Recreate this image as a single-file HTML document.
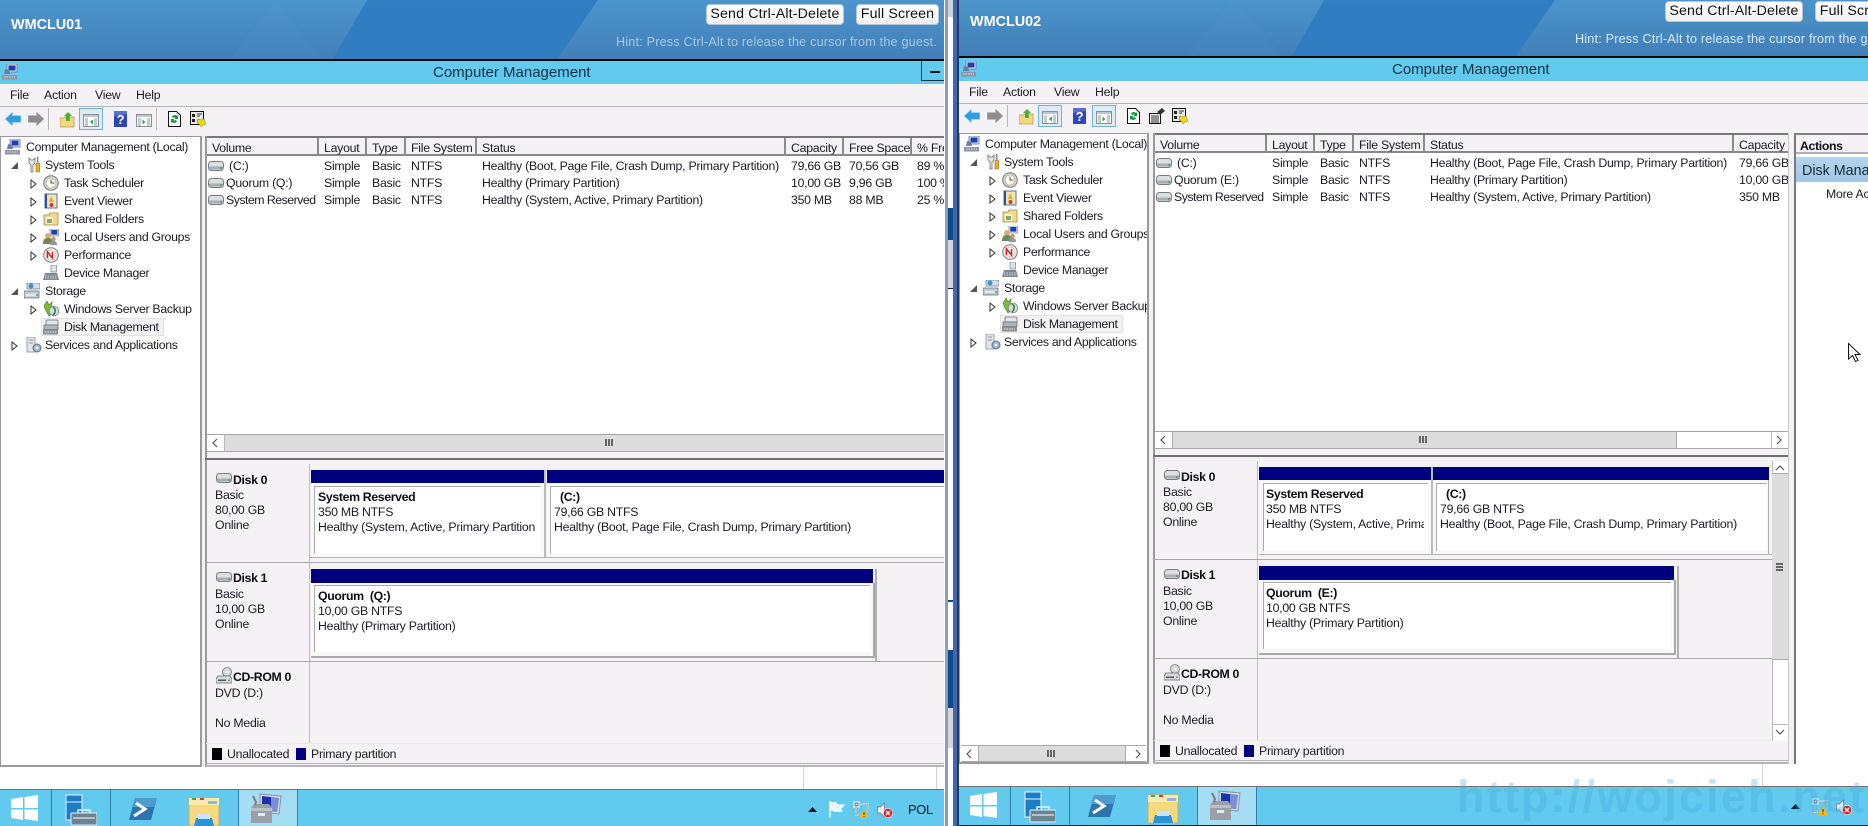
<!DOCTYPE html>
<html lang="en"><head><meta charset="utf-8"><title>Computer Management</title>
<style>
html,body{margin:0;padding:0;background:#fff}
#root{position:relative;width:1868px;height:826px;overflow:hidden;background:#fff;font-family:"Liberation Sans",sans-serif;font-size:12.3px;letter-spacing:-.25px;color:#1b1b24;filter:blur(.3px)}
.p{position:absolute;overflow:hidden}
.b{position:absolute}
.t{position:absolute;white-space:nowrap;line-height:16px;height:16px}
.tree .t{letter-spacing:-.3px}
.s{font-weight:bold;color:#0d0d16;letter-spacing:-.35px}
svg.i{position:absolute;overflow:visible}
.btn{position:absolute;background:linear-gradient(#fff,#efefef);border:1px solid #b9c6d2;border-radius:4px;box-sizing:border-box;color:#111;font-size:14.2px;letter-spacing:.15px;text-align:center;white-space:nowrap;line-height:19px}
</style></head><body><div id="root">
<svg width="0" height="0" style="position:absolute">
<defs>
<symbol id="pc" viewBox="0 0 16 16"><rect x="5" y="0" width="10" height="8" fill="#dfe6f2" stroke="#7788a8"/><rect x="6.5" y="1.5" width="7" height="5" fill="#1c3fb0"/><path d="M3 5l4 1 1 4H2z" fill="#6b7ca0"/><rect x="0" y="11" width="15" height="4.5" fill="#8b95a6"/><path d="M2 13h11" stroke="#dfe3ea" stroke-dasharray="1.5 1"/></symbol>
<symbol id="tools" viewBox="0 0 16 16"><path d="M3 1v5l2 2v7h2V8l2-2V1L7 3H5z" fill="#e6e6e6" stroke="#6f6f6f" stroke-width=".8"/><rect x="10" y="6" width="3.6" height="9" rx="1" fill="#eeb020" stroke="#8a6a10" stroke-width=".6"/><rect x="11" y="0" width="1.5" height="7" fill="#8a8f98"/></symbol>
<symbol id="clock" viewBox="0 0 16 16"><circle cx="8" cy="8" r="7.3" fill="#dbd5c3" stroke="#7a7a86"/><circle cx="8" cy="8" r="5" fill="#fffdf2" stroke="#a69f85" stroke-width=".6"/><path d="M8 4.5V8h3.5" stroke="#50505a" stroke-width="1" fill="none"/></symbol>
<symbol id="evt" viewBox="0 0 16 16"><rect x="2" y="1" width="12" height="14" fill="#f1e4bd" stroke="#5472a8"/><path d="M3 1v14" stroke="#2d4f9e" stroke-width="2"/><path d="M8 3l3 6H6z" fill="#e8b020"/><circle cx="8.5" cy="12" r="2" fill="#c83a3a"/></symbol>
<symbol id="share" viewBox="0 0 16 16"><path d="M1 4h5l1-2h8v12H1z" fill="#f0d98a" stroke="#a58c48" stroke-width=".8"/><rect x="3" y="6" width="7" height="7" fill="#fbf3cf"/><path d="M4 9h5M4 11h5" stroke="#3a7d3a" stroke-width="1.2"/></symbol>
<symbol id="users" viewBox="0 0 16 16"><rect x="7" y="0" width="8.5" height="7" fill="#e1e7f1" stroke="#7788a8" stroke-width=".7"/><rect x="8.3" y="1" width="6" height="4.6" fill="#1c3fb0"/><circle cx="5" cy="7" r="3" fill="#d9ae74"/><path d="M0 15c0-5 2-6 5-6s5 1 5 6z" fill="#6e8a56"/><circle cx="10.5" cy="10" r="2.2" fill="#c89a60"/><path d="M7 16c0-3 1-4 3.5-4s3.5 1 3.5 4z" fill="#8b97ad"/></symbol>
<symbol id="perf" viewBox="0 0 16 16"><circle cx="8" cy="8" r="7.3" fill="#f2e9e5" stroke="#7d7d88"/><circle cx="8" cy="8" r="4.8" fill="#fff" stroke="#c9b6ae" stroke-width=".6"/><path d="M4.5 11V5l5 6V5" stroke="#d01e1e" stroke-width="1.5" fill="none"/></symbol>
<symbol id="dev" viewBox="0 0 16 16"><rect x="8" y="0" width="5.5" height="7" fill="#dce1e7" stroke="#79808c" stroke-width=".7"/><path d="M2 8h12l2 7H0z" fill="#7f8793"/><path d="M2 11h12M2 13h12" stroke="#d5d9df" stroke-dasharray="1.5 1"/></symbol>
<symbol id="stor" viewBox="0 0 16 16"><rect x="3" y="0" width="13" height="6" rx="1" fill="#d4e1ea" stroke="#6d7f8f" stroke-width=".8"/><circle cx="7" cy="3" r="2.5" fill="#3d96c9"/><rect x="0" y="8" width="15" height="7" rx="1" fill="#c7cdd4" stroke="#5f6a75" stroke-width=".8"/><path d="M2 12h10" stroke="#fff"/><circle cx="13" cy="12" r="1" fill="#3b3"/></symbol>
<symbol id="wsb" viewBox="0 0 16 16"><path d="M1 5l3-5 2 4 3-3-1 6 3 3-5 5-3-5z" fill="#7db93a" stroke="#3c7d22" stroke-width=".6"/><circle cx="11" cy="10" r="4.8" fill="#d7dce2" stroke="#6f7580" stroke-width=".7"/><path d="M10 6c3 2 3 5 0 8" stroke="#2c8b3a" stroke-width="1.6" fill="none"/></symbol>
<symbol id="disk" viewBox="0 0 16 16"><rect x="3" y="1" width="12" height="5" rx="1" fill="#e4e7ea" stroke="#6b7077" stroke-width=".8"/><rect x="1" y="6" width="14" height="4.5" fill="#b2b6bb" stroke="#6b7077" stroke-width=".8"/><rect x="0" y="10.5" width="15" height="5" fill="#8b9098"/><path d="M2 13h11" stroke="#eceef0" stroke-dasharray="1.5 1"/></symbol>
<symbol id="svc" viewBox="0 0 16 16"><rect x="1" y="0" width="8" height="15" fill="#e1e4e8" stroke="#8c929b" stroke-width=".8"/><path d="M3 3h4M3 6h4" stroke="#8b98a8"/><circle cx="11" cy="11" r="4" fill="#9fb4c8" stroke="#5f7488"/><circle cx="11" cy="11" r="1.4" fill="#eef2f5"/></symbol>
<symbol id="drive" viewBox="0 0 16 10"><rect x=".5" y=".5" width="15" height="9" rx="3" fill="#dcdfe2" stroke="#777c83"/><rect x="1" y="5.500" width="14" height="3" rx="1" fill="#a8adb3"/><rect x="12" y="6" width="2" height="2" fill="#5a5"/></symbol>
<symbol id="cd" viewBox="0 0 16 17"><circle cx="11" cy="5" r="4.5" fill="#d5d9dd" stroke="#6f7379" stroke-width=".8"/><circle cx="11" cy="5" r="1.1" fill="#fff"/><path d="M2 9h12l2 3v4H0v-4z" fill="#d9dcdf" stroke="#62676d" stroke-width=".8"/><rect x="2" y="12.5" width="8" height="1.5" fill="#555"/><rect x="12" y="12.5" width="2" height="1.5" fill="#5a5"/></symbol>
<symbol id="back" viewBox="0 0 16 14"><path d="M7.5 0v3.5H16v7H7.5V14L0 7z" fill="#2f9ee0" stroke="#a8daf4" stroke-width=".8"/></symbol>
<symbol id="fwd" viewBox="0 0 16 14"><path d="M8.5 0v3.5H0v7h8.5V14L16 7z" fill="#8c8c8c" stroke="#bdbdbd" stroke-width=".8"/></symbol>
<symbol id="upf" viewBox="0 0 15 16"><path d="M0 6h4l1-1h9v10H0z" fill="#f1d77e" stroke="#b99a4b" stroke-width=".8"/><path d="M8 0l4 4H9.8v5H6V4H4z" fill="#4aae3c"/></symbol>
<symbol id="ptree" viewBox="0 0 16 13"><rect x=".5" y=".5" width="15" height="12" fill="#fff" stroke="#8a9099"/><rect x="1" y="1" width="14" height="2" fill="#c1c6cd"/><path d="M2 5h3M2 7h3M2 9h3M2 11h3M11 5h3M11 7h3M11 9h3M11 11h3" stroke="#7f9aa0"/><path d="M10 5.5V10.5L7 8z" fill="#3da04a"/></symbol>
<symbol id="pact" viewBox="0 0 16 13"><rect x=".5" y=".5" width="15" height="12" fill="#fff" stroke="#8a9099"/><rect x="1" y="1" width="14" height="2" fill="#c1c6cd"/><path d="M2 5h3M2 7h3M2 9h3M2 11h3M11 5h3M11 7h3M11 9h3M11 11h3" stroke="#7f9aa0"/><path d="M6.500 5.500V10.500L9.500 8z" fill="#3da04a"/></symbol>
<symbol id="help" viewBox="0 0 13 16"><rect width="13" height="16" fill="#2f47b4"/><path d="M0 0h13v3L0 5z" fill="#5a70d0"/><text x="6.5" y="13" text-anchor="middle" fill="#fff" font-size="13" font-family="Liberation Sans" font-weight="bold">?</text></symbol>
<symbol id="refresh" viewBox="0 0 13 16"><path d="M.5.500h8l4 4V15.500H.5z" fill="#fff" stroke="#111"/><path d="M4 6a3 3 0 0 1 5-1l1-1v4H6.500l1-1a1.500 1.500 0 0 0-2 0zM9 10a3 3 0 0 1-5 1l-1 1V8h3.500l-1 1a1.500 1.500 0 0 0 2 0z" fill="#0f9a3c"/></symbol>
<symbol id="export" viewBox="0 0 16 16"><rect x=".5" y=".5" width="13" height="13" fill="#e8e8e8" stroke="#111"/><path d="M2 3h3v3H2zM2 8h3v3H2z" fill="#222"/><path d="M7 3h5M7 5h3M7 9h2" stroke="#333"/><path d="M8 8l3 1 3-1 1 3 1 2-3 1-2 2-2-3-2-1z" fill="#eadb18" stroke="#8a7f0d" stroke-width=".5"/></symbol>
<symbol id="props" viewBox="0 0 16 16"><rect x=".5" y="5.500" width="11" height="10" fill="#fff" stroke="#111"/><path d="M2 8h8M2 10h8M2 12h8M2 14h8" stroke="#222"/><path d="M8 4l5-4 3 3-5 4z" fill="#333"/></symbol>
<symbol id="win" viewBox="0 0 27 26"><path d="M0 4l12-2v11H0zM13.500 2L27 0v13H13.500zM0 14.500h12V25L0 23zM13.500 14.500H27V26l-13.500-2z" fill="#fff"/></symbol>
<symbol id="srv" viewBox="0 0 32 31"><rect x="1" y="1" width="16" height="25" fill="#1f7dc6" stroke="#e8f4fb"/><path d="M1 8h16" stroke="#e8f4fb"/><rect x="6" y="19" width="26" height="12" rx="1" fill="#6a8494" stroke="#e6f2f8"/><path d="M13 19v-3h12v3" fill="none" stroke="#e6f2f8" stroke-width="1.5"/><path d="M8 24h22" stroke="#fff"/></symbol>
<symbol id="ps" viewBox="0 0 28 22"><path d="M6 0h22l-6 22H0z" fill="#2e72ae"/><path d="M6 0h22l-3 9H3z" fill="#4f9bd0"/><path d="M7 5l9 6-11 7" fill="none" stroke="#fff" stroke-width="3"/></symbol>
<symbol id="exp" viewBox="0 0 32 31"><path d="M1 3h30v28H1z" fill="#f6d97f" stroke="#c9ad56"/><path d="M1 3h30v7H1z" fill="#f9eab0"/><rect x="4" y="3" width="4" height="2" fill="#4aa64a"/><rect x="12" y="3" width="4" height="2" fill="#d34"/><rect x="20" y="6" width="9" height="3" fill="#8fb6dc"/><path d="M6 31l2-8h16l2 8z" fill="#2d93d8"/><rect x="10" y="19" width="12" height="5" fill="#c7e4f8"/></symbol>
<symbol id="mgmt" viewBox="0 0 32 32"><path d="M10 1l21 2-2 18-19-2z" fill="#d6dde7" stroke="#8793a3"/><path d="M12 3l17 2-2 14-15-2z" fill="#1c31ad"/><path d="M21 4l8 1-2 14-6-1z" fill="#7d8ed8"/><path d="M1 15l3-4h15l3 4v15H1z" fill="#9aa0a6"/><path d="M1 15h21v3H1z" fill="#bcc0c5"/><rect x="8" y="20" width="7" height="3" fill="#e6e8ea"/><path d="M3 3l3 6-1 3" stroke="#7c7f85" stroke-width="2" fill="none"/></symbol>
<symbol id="flag" viewBox="0 0 16 17"><path d="M1 0v16.500" stroke="#fff" stroke-width="1.400"/><path d="M1.700 1.500h4.800l2.500 2.500h6l-3 4 1 2.500H6L3.500 9H1.700z" fill="#e6f5fc" stroke="#fff" stroke-width="1"/></symbol>
<symbol id="net" viewBox="0 0 16 17"><rect x="1" y="1" width="5" height="5" fill="#cfe8f5" stroke="#fff" stroke-width="1"/><rect x="2" y="2" width="3" height="3" fill="none" stroke="#28465c" stroke-width=".7"/><path d="M3 6v8h3M6 3h9v9" stroke="#fff" stroke-width="1.800" fill="none"/><path d="M3 6v8h3M6 3h9v9" stroke="#28465c" stroke-width=".6" fill="none"/><path d="M11 8l5 9H6z" fill="#f6b916"/><path d="M11 11v3M11 15v1" stroke="#222"/></symbol>
<symbol id="snd" viewBox="0 0 16 16"><path d="M.5 5h3l4-4v14l-4-4h-3z" fill="#f3f7fa" stroke="#5a7285" stroke-width=".7"/><circle cx="11" cy="11" r="4.700" fill="#d8212f" stroke="#fff" stroke-width=".6"/><path d="M9 9l4 4M13 9l-4 4" stroke="#fff" stroke-width="1.300"/></symbol>
</defs>
</svg>

<!-- LEFT WINDOW -->
<div class="p" style="left:0;top:0;width:944px;height:826px;background:#f4f2f5">
  <div class="b" style="left:0;top:0;width:944px;height:59px;background:linear-gradient(#4b95cc,#437fb8)"></div>
  <svg class="i" style="left:0;top:0" width="944" height="59"><polygon points="367,0 598,0 557,59 333,59" fill="#2f7cc2" opacity=".95"/><polygon points="275,0 323,59 230,59" fill="#5a9cd0" opacity=".12"/></svg>
  <div class="t" style="left:11px;top:17px;color:#fff;font-weight:bold;font-size:14.4px;letter-spacing:0">WMCLU01</div>
  <div class="btn" style="left:706px;top:4px;width:138px;height:21px">Send Ctrl-Alt-Delete</div>
  <div class="btn" style="left:856px;top:4px;width:83px;height:21px">Full Screen</div>
  <div class="t" style="left:616px;top:34px;color:#a7c9e4;font-size:12.6px;letter-spacing:.2px">Hint: Press Ctrl-Alt to release the cursor from the guest.</div>
  <div class="b" style="left:0;top:59px;width:944px;height:2px;background:#060606"></div>
  <div class="b" style="left:0;top:61px;width:944px;height:23px;background:#62c9ef"></div>
  <svg class="i" style="left:2px;top:64px" width="16" height="16"><use href="#pc"/></svg>
  <div class="t" style="left:433px;top:65px;font-size:15px;letter-spacing:0;color:#0d3342">Computer Management</div>
  <div class="b" style="left:921px;top:61px;width:23px;height:20px;border-left:1px solid #1d3542;border-bottom:1px solid #1d3542;box-sizing:border-box"></div>
  <div class="b" style="left:930px;top:71px;width:10px;height:2px;background:#0c1a20"></div>
  <div class="b" style="left:0;top:84px;width:944px;height:22px;background:#f4f2f5;border-bottom:1px solid #b5b5b8"></div>
  <div class="t" style="left:10px;top:87px">File</div><div class="t" style="left:44px;top:87px">Action</div><div class="t" style="left:95px;top:87px">View</div><div class="t" style="left:136px;top:87px">Help</div>
  <svg class="i" style="left:5px;top:112px" width="16" height="14"><use href="#back"/></svg>
  <svg class="i" style="left:28px;top:112px" width="16" height="14"><use href="#fwd"/></svg>
  <div class="b" style="left:48px;top:108px;width:1px;height:22px;background:#b8b8bb"></div>
  <svg class="i" style="left:60px;top:112px" width="15" height="16"><use href="#upf"/></svg>
  <div class="b" style="left:79px;top:108px;width:24px;height:22px;background:#dcecf5;border:1px solid #72b2d4;box-sizing:border-box"></div>
  <svg class="i" style="left:83px;top:114px" width="16" height="13"><use href="#ptree"/></svg>
  <svg class="i" style="left:114px;top:111px" width="13" height="16"><use href="#help"/></svg>
  <svg class="i" style="left:136px;top:114px" width="16" height="13"><use href="#pact"/></svg>
  <div class="b" style="left:156px;top:108px;width:1px;height:22px;background:#b8b8bb"></div>
  <svg class="i" style="left:168px;top:111px" width="13" height="16"><use href="#refresh"/></svg>
  <svg class="i" style="left:190px;top:111px" width="16" height="16"><use href="#export"/></svg>

  <!-- tree -->
  <div class="p tree" style="left:0;top:136px;width:202px;height:631px;background:#fff;border:1px solid #9a9a9a;border-width:1px 2px 2px 1px;box-sizing:border-box">
    <div style="position:absolute;left:-1px;top:-137px;width:202px;height:767px">
    <svg class="i" style="left:5px;top:139px" width="16" height="16"><use href="#pc"/></svg><div class="t" style="left:26px;top:139px">Computer Management (Local)</div>
    <svg class="i" style="left:11px;top:162px" width="7" height="7"><path d="M0 7L7 7 7 0z" fill="#555"/></svg>
    <svg class="i" style="left:26px;top:157px" width="16" height="16"><use href="#tools"/></svg><div class="t" style="left:45px;top:157px">System Tools</div>
    <svg class="i" style="left:30px;top:179px" width="7" height="10"><path d="M1 1l5 4-5 4z" fill="#fff" stroke="#333"/></svg>
    <svg class="i" style="left:43px;top:175px" width="16" height="16"><use href="#clock"/></svg><div class="t" style="left:64px;top:175px">Task Scheduler</div>
    <svg class="i" style="left:30px;top:197px" width="7" height="10"><path d="M1 1l5 4-5 4z" fill="#fff" stroke="#333"/></svg>
    <svg class="i" style="left:43px;top:193px" width="16" height="16"><use href="#evt"/></svg><div class="t" style="left:64px;top:193px">Event Viewer</div>
    <svg class="i" style="left:30px;top:215px" width="7" height="10"><path d="M1 1l5 4-5 4z" fill="#fff" stroke="#333"/></svg>
    <svg class="i" style="left:43px;top:211px" width="16" height="16"><use href="#share"/></svg><div class="t" style="left:64px;top:211px">Shared Folders</div>
    <svg class="i" style="left:30px;top:233px" width="7" height="10"><path d="M1 1l5 4-5 4z" fill="#fff" stroke="#333"/></svg>
    <svg class="i" style="left:43px;top:229px" width="16" height="16"><use href="#users"/></svg><div class="t" style="left:64px;top:229px">Local Users and Groups</div>
    <svg class="i" style="left:30px;top:251px" width="7" height="10"><path d="M1 1l5 4-5 4z" fill="#fff" stroke="#333"/></svg>
    <svg class="i" style="left:43px;top:247px" width="16" height="16"><use href="#perf"/></svg><div class="t" style="left:64px;top:247px">Performance</div>
    <svg class="i" style="left:43px;top:265px" width="16" height="16"><use href="#dev"/></svg><div class="t" style="left:64px;top:265px">Device Manager</div>
    <svg class="i" style="left:11px;top:288px" width="7" height="7"><path d="M0 7L7 7 7 0z" fill="#555"/></svg>
    <svg class="i" style="left:24px;top:283px" width="16" height="16"><use href="#stor"/></svg><div class="t" style="left:45px;top:283px">Storage</div>
    <svg class="i" style="left:30px;top:305px" width="7" height="10"><path d="M1 1l5 4-5 4z" fill="#fff" stroke="#333"/></svg>
    <svg class="i" style="left:43px;top:301px" width="16" height="16"><use href="#wsb"/></svg><div class="t" style="left:64px;top:301px">Windows Server Backup</div>
    <div class="b" style="left:41px;top:318px;width:123px;height:18px;background:#f2f2f3;border:1px solid #e2e2e4;box-sizing:border-box"></div>
    <svg class="i" style="left:43px;top:319px" width="16" height="16"><use href="#disk"/></svg><div class="t" style="left:64px;top:319px">Disk Management</div>
    <svg class="i" style="left:11px;top:341px" width="7" height="10"><path d="M1 1l5 4-5 4z" fill="#fff" stroke="#333"/></svg>
    <svg class="i" style="left:26px;top:337px" width="16" height="16"><use href="#svc"/></svg><div class="t" style="left:45px;top:337px">Services and Applications</div>
    </div>
  </div>

  <!-- list -->
  <div class="b" style="left:205px;top:136px;width:739px;height:2px;background:#777"></div>
  <div class="b" style="left:205px;top:136px;width:2px;height:631px;background:#9a9a9a"></div>
  <div class="b" style="left:207px;top:138px;width:737px;height:18px;background:#f4f2f5;border-bottom:2px solid #888;box-sizing:border-box"></div>
  <div class="b" style="left:207px;top:156px;width:737px;height:278px;background:#fff"></div>
  <div class="b" style="left:317px;top:138px;width:2px;height:18px;background:#8c8c8c"></div><div class="b" style="left:365px;top:138px;width:2px;height:18px;background:#8c8c8c"></div><div class="b" style="left:404px;top:138px;width:2px;height:18px;background:#8c8c8c"></div><div class="b" style="left:475px;top:138px;width:2px;height:18px;background:#8c8c8c"></div><div class="b" style="left:784px;top:138px;width:2px;height:18px;background:#8c8c8c"></div><div class="b" style="left:842px;top:138px;width:2px;height:18px;background:#8c8c8c"></div><div class="b" style="left:910px;top:138px;width:2px;height:18px;background:#8c8c8c"></div>
  <div class="t" style="left:212px;top:140px">Volume</div><div class="t" style="left:324px;top:140px">Layout</div><div class="t" style="left:372px;top:140px">Type</div><div class="t" style="left:411px;top:140px">File System</div><div class="t" style="left:482px;top:140px">Status</div><div class="t" style="left:791px;top:140px">Capacity</div><div class="t" style="left:849px;top:140px">Free Space</div><div class="t" style="left:917px;top:140px">% Fre</div>
  <svg class="i" style="left:208px;top:161px" width="16" height="10"><use href="#drive"/></svg><div class="t" style="left:229px;top:158px">(C:)</div><div class="t" style="left:324px;top:158px">Simple</div><div class="t" style="left:372px;top:158px">Basic</div><div class="t" style="left:411px;top:158px">NTFS</div><div class="t" style="left:482px;top:158px">Healthy (Boot, Page File, Crash Dump, Primary Partition)</div><div class="t" style="left:791px;top:158px">79,66 GB</div><div class="t" style="left:849px;top:158px">70,56 GB</div><div class="t" style="left:917px;top:158px">89 %</div>
  <svg class="i" style="left:208px;top:178px" width="16" height="10"><use href="#drive"/></svg><div class="t" style="left:226px;top:175px">Quorum (Q:)</div><div class="t" style="left:324px;top:175px">Simple</div><div class="t" style="left:372px;top:175px">Basic</div><div class="t" style="left:411px;top:175px">NTFS</div><div class="t" style="left:482px;top:175px">Healthy (Primary Partition)</div><div class="t" style="left:791px;top:175px">10,00 GB</div><div class="t" style="left:849px;top:175px">9,96 GB</div><div class="t" style="left:917px;top:175px">100 %</div>
  <svg class="i" style="left:208px;top:195px" width="16" height="10"><use href="#drive"/></svg><div class="t" style="left:226px;top:192px;letter-spacing:-.5px">System Reserved</div><div class="t" style="left:324px;top:192px">Simple</div><div class="t" style="left:372px;top:192px">Basic</div><div class="t" style="left:411px;top:192px">NTFS</div><div class="t" style="left:482px;top:192px">Healthy (System, Active, Primary Partition)</div><div class="t" style="left:791px;top:192px">350 MB</div><div class="t" style="left:849px;top:192px">88 MB</div><div class="t" style="left:917px;top:192px">25 %</div>
  <!-- h scrollbar -->
  <div class="b" style="left:207px;top:434px;width:737px;height:18px;background:#dcdcdc;border:1px solid #a5a5a5;border-width:1px 0;box-sizing:border-box"></div>
  <div class="b" style="left:207px;top:435px;width:17px;height:16px;background:#fff;border-right:1px solid #bbb"></div>
  <svg class="i" style="left:211px;top:438px" width="8" height="10"><path d="M6 1L2 5l4 4" fill="none" stroke="#555" stroke-width="1.200"/></svg>
  <div class="b" style="left:605px;top:439px;width:8px;height:7px;background:repeating-linear-gradient(90deg,#666 0 2px,transparent 2px 3px)"></div>
  <div class="b" style="left:207px;top:452px;width:737px;height:6px;background:#f4f2f5"></div>
  <div class="b" style="left:205px;top:458px;width:739px;height:2px;background:#6f6f6f"></div>
  <!-- disks -->
  <div class="b" style="left:309px;top:464px;width:1px;height:280px;background:#bdbdc0"></div>
  <div class="b" style="left:206px;top:562px;width:738px;height:1px;background:#a9a9ac"></div>
  <div class="b" style="left:206px;top:661px;width:738px;height:1px;background:#a9a9ac"></div>
  <div class="b" style="left:310px;top:557px;width:634px;height:1px;background:#b4b4b7"></div>
  <div class="b" style="left:311px;top:470px;width:233px;height:13px;background:#00007f"></div>
  <div class="b" style="left:547px;top:470px;width:397px;height:13px;background:#00007f"></div>
  <div class="b" style="left:544px;top:470px;width:2px;height:87px;background:#bbb"></div>
  <div class="b" style="left:311px;top:483px;width:233px;height:74px;background:#f8f8f8"></div>
  <div class="b" style="left:547px;top:483px;width:397px;height:74px;background:#f8f8f8"></div>
  <div class="b" style="left:314px;top:486px;width:227px;height:68px;background:#fff;border:1px solid #aaa;border-width:1px 0 0 1px;box-sizing:border-box"></div>
  <div class="b" style="left:550px;top:486px;width:394px;height:68px;background:#fff;border:1px solid #aaa;border-width:1px 0 0 1px;box-sizing:border-box"></div>
  <div class="t s" style="left:318px;top:489px">System Reserved</div><div class="t" style="left:318px;top:504px">350 MB NTFS</div><div class="t" style="left:318px;top:519px;width:221px;overflow:hidden">Healthy (System, Active, Primary Partition</div>
  <div class="t s" style="left:560px;top:489px">(C:)</div><div class="t" style="left:554px;top:504px">79,66 GB NTFS</div><div class="t" style="left:554px;top:519px">Healthy (Boot, Page File, Crash Dump, Primary Partition)</div>
  <svg class="i" style="left:216px;top:473px" width="16" height="10"><use href="#drive"/></svg><div class="t s" style="left:233px;top:472px">Disk 0</div><div class="t" style="left:215px;top:487px">Basic</div><div class="t" style="left:215px;top:502px">80,00 GB</div><div class="t" style="left:215px;top:517px">Online</div>
  <div class="b" style="left:311px;top:569px;width:566px;height:92px;border-right:2px solid #b0b0b3;box-sizing:border-box"></div>
  <div class="b" style="left:311px;top:569px;width:562px;height:14px;background:#00007f"></div>
  <div class="b" style="left:311px;top:583px;width:562px;height:73px;background:#f8f8f8;border-right:2px solid #aaa;border-bottom:2px solid #aaa"></div>
  <div class="b" style="left:314px;top:585px;width:556px;height:67px;background:#fff;border:1px solid #aaa;border-width:1px 0 0 1px;box-sizing:border-box"></div>
  <div class="t s" style="left:318px;top:588px">Quorum&nbsp; (Q:)</div><div class="t" style="left:318px;top:603px">10,00 GB NTFS</div><div class="t" style="left:318px;top:618px">Healthy (Primary Partition)</div>
  <svg class="i" style="left:216px;top:572px" width="16" height="10"><use href="#drive"/></svg><div class="t s" style="left:233px;top:570px">Disk 1</div><div class="t" style="left:215px;top:586px">Basic</div><div class="t" style="left:215px;top:601px">10,00 GB</div><div class="t" style="left:215px;top:616px">Online</div>
  <svg class="i" style="left:216px;top:667px" width="16" height="17"><use href="#cd"/></svg><div class="t s" style="left:233px;top:669px">CD-ROM 0</div><div class="t" style="left:215px;top:685px">DVD (D:)</div><div class="t" style="left:215px;top:715px">No Media</div>
  <div class="b" style="left:206px;top:743px;width:738px;height:1px;background:#eaeaec"></div>
  <div class="b" style="left:212px;top:748px;width:10px;height:12px;background:#000"></div><div class="t" style="left:227px;top:746px">Unallocated</div>
  <div class="b" style="left:296px;top:748px;width:10px;height:12px;background:#00007f"></div><div class="t" style="left:311px;top:746px">Primary partition</div>
  <div class="b" style="left:205px;top:763px;width:739px;height:1px;background:#b4b4b7"></div>
  <div class="b" style="left:205px;top:765px;width:739px;height:2px;background:#b4b4b7"></div>
  <!-- status -->
  <div class="b" style="left:0;top:767px;width:944px;height:22px;background:#fff"></div>
  <div class="b" style="left:803px;top:767px;width:1px;height:22px;background:#d3d3d6"></div><div class="b" style="left:936px;top:767px;width:1px;height:22px;background:#d3d3d6"></div>
  <div class="b" style="left:0;top:789px;width:944px;height:1px;background:#727272"></div>
  <div class="b" style="left:0;top:790px;width:944px;height:36px;background:#62c9ef"></div>
  <svg class="i" style="left:11px;top:795px" width="27" height="26"><use href="#win"/></svg>
  <div class="b" style="left:51px;top:790px;width:1px;height:36px;background:#2d7ea6"></div><div class="b" style="left:110px;top:790px;width:1px;height:36px;background:#2d7ea6"></div>
  <svg class="i" style="left:65px;top:793px" width="32" height="33"><use href="#srv"/></svg>
  <svg class="i" style="left:129px;top:798px" width="28" height="22"><use href="#ps"/></svg>
  <svg class="i" style="left:188px;top:795px" width="32" height="31"><use href="#exp"/></svg>
  <div class="b" style="left:238px;top:790px;width:58px;height:36px;background:#a4ddf4;border-left:1px solid #2d7ea6;border-right:1px solid #2d7ea6"></div>
  <svg class="i" style="left:250px;top:793px" width="32" height="32"><use href="#mgmt"/></svg>
  <svg class="i" style="left:808px;top:806px" width="9" height="6"><path d="M0 6l4.500-5L9 6z" fill="#0c1a25"/></svg>
  <svg class="i" style="left:829px;top:801px" width="16" height="17"><use href="#flag"/></svg>
  <svg class="i" style="left:853px;top:801px" width="16" height="17"><use href="#net"/></svg>
  <svg class="i" style="left:877px;top:802px" width="16" height="16"><use href="#snd"/></svg>
  <div class="t" style="left:908px;top:802px;font-size:12.8px;color:#0d1a25">POL</div>
</div>

<!-- STRIP -->
<div class="b" style="left:944px;top:0;width:15px;height:826px;background:#fff"></div>
<div class="b" style="left:945px;top:0;width:3px;height:826px;background:#8d9cbc"></div>
<div class="b" style="left:953px;top:0;width:4px;height:826px;background:#3f68b2"></div>
<div class="b" style="left:957px;top:0;width:2px;height:826px;background:#26385e"></div>
<div class="b" style="left:948px;top:0;width:5px;height:17px;background:#cfd2d6"></div>
<div class="b" style="left:948px;top:208px;width:5px;height:32px;background:#0f4a8a"></div>
<div class="b" style="left:948px;top:240px;width:5px;height:48px;background:#d6d6d8"></div>
<div class="b" style="left:948px;top:288px;width:5px;height:1px;background:#223"></div>
<div class="b" style="left:948px;top:600px;width:5px;height:2px;background:#0f4a8a"></div>
<div class="b" style="left:948px;top:650px;width:5px;height:58px;background:#0f4a8a"></div>
<div class="b" style="left:948px;top:708px;width:5px;height:40px;background:#d6d6d8"></div>

<!-- RIGHT WINDOW -->
<div class="p" style="left:959px;top:0;width:909px;height:826px;background:#f4f2f5">
 <div style="position:absolute;left:-959px;top:-3px;width:1868px;height:829px">
  <div class="b" style="left:959px;top:0;width:909px;height:59px;background:linear-gradient(#4b95cc,#437fb8)"></div>
  <svg class="i" style="left:0;top:0" width="1868" height="59"><polygon points="1326,0 1557,0 1516,59 1292,59" fill="#2f7cc2" opacity=".95"/><polygon points="1234,0 1282,59 1189,59" fill="#5a9cd0" opacity=".12"/></svg>
  <div class="t" style="left:970px;top:17px;color:#fff;font-weight:bold;font-size:14.4px;letter-spacing:0">WMCLU02</div>
  <div class="btn" style="left:1665px;top:4px;width:138px;height:21px">Send Ctrl-Alt-Delete</div>
  <div class="btn" style="left:1815px;top:4px;width:83px;height:21px">Full Screen</div>
  <div class="t" style="left:1575px;top:34px;color:#dbe9f5;font-size:12.6px;letter-spacing:.2px">Hint: Press Ctrl-Alt to release the cursor from the guest.</div>
  <div class="b" style="left:959px;top:59px;width:909px;height:2px;background:#060606"></div>
  <div class="b" style="left:959px;top:61px;width:909px;height:23px;background:#62c9ef"></div>
  <svg class="i" style="left:961px;top:64px" width="16" height="16"><use href="#pc"/></svg>
  <div class="t" style="left:1392px;top:65px;font-size:15px;letter-spacing:0;color:#0d3342">Computer Management</div>
  <div class="b" style="left:959px;top:84px;width:909px;height:22px;background:#f4f2f5;border-bottom:1px solid #b5b5b8"></div>
  <div class="t" style="left:969px;top:87px">File</div><div class="t" style="left:1003px;top:87px">Action</div><div class="t" style="left:1054px;top:87px">View</div><div class="t" style="left:1095px;top:87px">Help</div>
  <svg class="i" style="left:964px;top:112px" width="16" height="14"><use href="#back"/></svg>
  <svg class="i" style="left:987px;top:112px" width="16" height="14"><use href="#fwd"/></svg>
  <div class="b" style="left:1007px;top:108px;width:1px;height:22px;background:#b8b8bb"></div>
  <svg class="i" style="left:1019px;top:112px" width="15" height="16"><use href="#upf"/></svg>
  <div class="b" style="left:1038px;top:108px;width:24px;height:22px;background:#dcecf5;border:1px solid #72b2d4;box-sizing:border-box"></div>
  <svg class="i" style="left:1042px;top:114px" width="16" height="13"><use href="#ptree"/></svg>
  <svg class="i" style="left:1073px;top:111px" width="13" height="16"><use href="#help"/></svg>
  <div class="b" style="left:1092px;top:108px;width:24px;height:22px;background:#dcecf5;border:1px solid #72b2d4;box-sizing:border-box"></div>
  <svg class="i" style="left:1096px;top:114px" width="16" height="13"><use href="#pact"/></svg>
  <svg class="i" style="left:1127px;top:111px" width="13" height="16"><use href="#refresh"/></svg>
  <svg class="i" style="left:1149px;top:111px" width="16" height="16"><use href="#props"/></svg>
  <svg class="i" style="left:1172px;top:111px" width="16" height="16"><use href="#export"/></svg>

  <!-- tree -->
  <div class="p tree" style="left:959px;top:136px;width:190px;height:631px;background:#fff;border:1px solid #9a9a9a;border-width:1px 2px 2px 1px;box-sizing:border-box">
    <div style="position:absolute;left:-1px;top:-137px;width:202px;height:767px">
    <svg class="i" style="left:5px;top:139px" width="16" height="16"><use href="#pc"/></svg><div class="t" style="left:26px;top:139px">Computer Management (Local)</div>
    <svg class="i" style="left:11px;top:162px" width="7" height="7"><path d="M0 7L7 7 7 0z" fill="#555"/></svg>
    <svg class="i" style="left:26px;top:157px" width="16" height="16"><use href="#tools"/></svg><div class="t" style="left:45px;top:157px">System Tools</div>
    <svg class="i" style="left:30px;top:179px" width="7" height="10"><path d="M1 1l5 4-5 4z" fill="#fff" stroke="#333"/></svg>
    <svg class="i" style="left:43px;top:175px" width="16" height="16"><use href="#clock"/></svg><div class="t" style="left:64px;top:175px">Task Scheduler</div>
    <svg class="i" style="left:30px;top:197px" width="7" height="10"><path d="M1 1l5 4-5 4z" fill="#fff" stroke="#333"/></svg>
    <svg class="i" style="left:43px;top:193px" width="16" height="16"><use href="#evt"/></svg><div class="t" style="left:64px;top:193px">Event Viewer</div>
    <svg class="i" style="left:30px;top:215px" width="7" height="10"><path d="M1 1l5 4-5 4z" fill="#fff" stroke="#333"/></svg>
    <svg class="i" style="left:43px;top:211px" width="16" height="16"><use href="#share"/></svg><div class="t" style="left:64px;top:211px">Shared Folders</div>
    <svg class="i" style="left:30px;top:233px" width="7" height="10"><path d="M1 1l5 4-5 4z" fill="#fff" stroke="#333"/></svg>
    <svg class="i" style="left:43px;top:229px" width="16" height="16"><use href="#users"/></svg><div class="t" style="left:64px;top:229px">Local Users and Groups</div>
    <svg class="i" style="left:30px;top:251px" width="7" height="10"><path d="M1 1l5 4-5 4z" fill="#fff" stroke="#333"/></svg>
    <svg class="i" style="left:43px;top:247px" width="16" height="16"><use href="#perf"/></svg><div class="t" style="left:64px;top:247px">Performance</div>
    <svg class="i" style="left:43px;top:265px" width="16" height="16"><use href="#dev"/></svg><div class="t" style="left:64px;top:265px">Device Manager</div>
    <svg class="i" style="left:11px;top:288px" width="7" height="7"><path d="M0 7L7 7 7 0z" fill="#555"/></svg>
    <svg class="i" style="left:24px;top:283px" width="16" height="16"><use href="#stor"/></svg><div class="t" style="left:45px;top:283px">Storage</div>
    <svg class="i" style="left:30px;top:305px" width="7" height="10"><path d="M1 1l5 4-5 4z" fill="#fff" stroke="#333"/></svg>
    <svg class="i" style="left:43px;top:301px" width="16" height="16"><use href="#wsb"/></svg><div class="t" style="left:64px;top:301px">Windows Server Backup</div>
    <div class="b" style="left:41px;top:318px;width:123px;height:18px;background:#f2f2f3;border:1px solid #e2e2e4;box-sizing:border-box"></div>
    <svg class="i" style="left:43px;top:319px" width="16" height="16"><use href="#disk"/></svg><div class="t" style="left:64px;top:319px">Disk Management</div>
    <svg class="i" style="left:11px;top:341px" width="7" height="10"><path d="M1 1l5 4-5 4z" fill="#fff" stroke="#333"/></svg>
    <svg class="i" style="left:26px;top:337px" width="16" height="16"><use href="#svc"/></svg><div class="t" style="left:45px;top:337px">Services and Applications</div>
    <!-- tree scroll -->
    <div class="b" style="left:2px;top:748px;width:185px;height:17px;background:#fff;border:1px solid #aaa;border-width:1px 0;box-sizing:border-box"></div>
    <div class="b" style="left:19px;top:749px;width:146px;height:15px;background:#dcdcdc;border:1px solid #aaa;border-width:0 1px"></div>
    <svg class="i" style="left:6px;top:752px" width="8" height="10"><path d="M6 1L2 5l4 4" fill="none" stroke="#555" stroke-width="1.200"/></svg>
    <svg class="i" style="left:175px;top:752px" width="8" height="10"><path d="M2 1l4 4-4 4" fill="none" stroke="#555" stroke-width="1.200"/></svg>
    <div class="b" style="left:88px;top:753px;width:8px;height:7px;background:repeating-linear-gradient(90deg,#666 0 2px,transparent 2px 3px)"></div>
    </div>
  </div>

  <!-- list -->
  <div class="b" style="left:1153px;top:136px;width:635px;height:2px;background:#777"></div>
  <div class="b" style="left:1153px;top:136px;width:2px;height:631px;background:#9a9a9a"></div>
  <div class="b" style="left:1155px;top:138px;width:633px;height:18px;background:#f4f2f5;border-bottom:2px solid #888;box-sizing:border-box"></div>
  <div class="b" style="left:1155px;top:156px;width:633px;height:278px;background:#fff"></div>
  <div class="b" style="left:1265px;top:138px;width:2px;height:18px;background:#8c8c8c"></div><div class="b" style="left:1313px;top:138px;width:2px;height:18px;background:#8c8c8c"></div><div class="b" style="left:1352px;top:138px;width:2px;height:18px;background:#8c8c8c"></div><div class="b" style="left:1423px;top:138px;width:2px;height:18px;background:#8c8c8c"></div><div class="b" style="left:1732px;top:138px;width:2px;height:18px;background:#8c8c8c"></div>
  <div class="t" style="left:1160px;top:140px">Volume</div><div class="t" style="left:1272px;top:140px">Layout</div><div class="t" style="left:1320px;top:140px">Type</div><div class="t" style="left:1359px;top:140px">File System</div><div class="t" style="left:1430px;top:140px">Status</div><div class="t" style="left:1739px;top:140px">Capacity</div>
  <svg class="i" style="left:1156px;top:161px" width="16" height="10"><use href="#drive"/></svg><div class="t" style="left:1177px;top:158px">(C:)</div><div class="t" style="left:1272px;top:158px">Simple</div><div class="t" style="left:1320px;top:158px">Basic</div><div class="t" style="left:1359px;top:158px">NTFS</div><div class="t" style="left:1430px;top:158px">Healthy (Boot, Page File, Crash Dump, Primary Partition)</div><div class="t" style="left:1739px;top:158px">79,66 GB</div>
  <svg class="i" style="left:1156px;top:178px" width="16" height="10"><use href="#drive"/></svg><div class="t" style="left:1174px;top:175px">Quorum (E:)</div><div class="t" style="left:1272px;top:175px">Simple</div><div class="t" style="left:1320px;top:175px">Basic</div><div class="t" style="left:1359px;top:175px">NTFS</div><div class="t" style="left:1430px;top:175px">Healthy (Primary Partition)</div><div class="t" style="left:1739px;top:175px">10,00 GB</div>
  <svg class="i" style="left:1156px;top:195px" width="16" height="10"><use href="#drive"/></svg><div class="t" style="left:1174px;top:192px;letter-spacing:-.5px">System Reserved</div><div class="t" style="left:1272px;top:192px">Simple</div><div class="t" style="left:1320px;top:192px">Basic</div><div class="t" style="left:1359px;top:192px">NTFS</div><div class="t" style="left:1430px;top:192px">Healthy (System, Active, Primary Partition)</div><div class="t" style="left:1739px;top:192px">350 MB</div>
  <!-- h scroll -->
  <div class="b" style="left:1155px;top:434px;width:633px;height:18px;background:#fff;border:1px solid #a5a5a5;border-width:1px 0;box-sizing:border-box"></div>
  <div class="b" style="left:1172px;top:435px;width:505px;height:16px;background:#dcdcdc;border:1px solid #aaa;border-width:0 1px;box-sizing:border-box"></div>
  <div class="b" style="left:1771px;top:435px;width:1px;height:16px;background:#bbb"></div>
  <svg class="i" style="left:1159px;top:438px" width="8" height="10"><path d="M6 1L2 5l4 4" fill="none" stroke="#555" stroke-width="1.200"/></svg>
  <svg class="i" style="left:1775px;top:438px" width="8" height="10"><path d="M2 1l4 4-4 4" fill="none" stroke="#555" stroke-width="1.200"/></svg>
  <div class="b" style="left:1419px;top:439px;width:8px;height:7px;background:repeating-linear-gradient(90deg,#666 0 2px,transparent 2px 3px)"></div>
  <div class="b" style="left:1153px;top:458px;width:635px;height:2px;background:#6f6f6f"></div>
  <!-- disks -->
  <div class="b" style="left:1257px;top:464px;width:1px;height:280px;background:#bdbdc0"></div>
  <div class="b" style="left:1154px;top:562px;width:618px;height:1px;background:#a9a9ac"></div>
  <div class="b" style="left:1154px;top:661px;width:618px;height:1px;background:#a9a9ac"></div>
  <div class="b" style="left:1259px;top:557px;width:513px;height:1px;background:#b4b4b7"></div>
  <div class="b" style="left:1259px;top:470px;width:172px;height:13px;background:#00007f"></div>
  <div class="b" style="left:1433px;top:470px;width:336px;height:13px;background:#00007f"></div>
  <div class="b" style="left:1431px;top:470px;width:2px;height:87px;background:#bbb"></div>
  <div class="b" style="left:1259px;top:483px;width:172px;height:74px;background:#f8f8f8"></div>
  <div class="b" style="left:1433px;top:483px;width:336px;height:74px;background:#f8f8f8;border-right:1px solid #b0b0b3;box-sizing:border-box"></div>
  <div class="b" style="left:1263px;top:486px;width:165px;height:68px;background:#fff;border:1px solid #aaa;border-width:1px 0 0 1px;box-sizing:border-box"></div>
  <div class="b" style="left:1436px;top:486px;width:331px;height:68px;background:#fff;border:1px solid #aaa;border-width:1px 0 0 1px;box-sizing:border-box"></div>
  <div class="t s" style="left:1266px;top:489px">System Reserved</div><div class="t" style="left:1266px;top:504px">350 MB NTFS</div><div class="t" style="left:1266px;top:519px;width:158px;overflow:hidden">Healthy (System, Active, Primary Partition</div>
  <div class="t s" style="left:1446px;top:489px">(C:)</div><div class="t" style="left:1440px;top:504px">79,66 GB NTFS</div><div class="t" style="left:1440px;top:519px">Healthy (Boot, Page File, Crash Dump, Primary Partition)</div>
  <svg class="i" style="left:1164px;top:473px" width="16" height="10"><use href="#drive"/></svg><div class="t s" style="left:1181px;top:472px">Disk 0</div><div class="t" style="left:1163px;top:487px">Basic</div><div class="t" style="left:1163px;top:502px">80,00 GB</div><div class="t" style="left:1163px;top:517px">Online</div>
  <div class="b" style="left:1259px;top:569px;width:420px;height:92px;border-right:2px solid #b0b0b3;box-sizing:border-box"></div>
  <div class="b" style="left:1259px;top:569px;width:415px;height:14px;background:#00007f"></div>
  <div class="b" style="left:1259px;top:583px;width:415px;height:73px;background:#f8f8f8;border-right:2px solid #aaa;border-bottom:2px solid #aaa"></div>
  <div class="b" style="left:1263px;top:585px;width:408px;height:67px;background:#fff;border:1px solid #aaa;border-width:1px 0 0 1px;box-sizing:border-box"></div>
  <div class="t s" style="left:1266px;top:588px">Quorum&nbsp; (E:)</div><div class="t" style="left:1266px;top:603px">10,00 GB NTFS</div><div class="t" style="left:1266px;top:618px">Healthy (Primary Partition)</div>
  <svg class="i" style="left:1164px;top:572px" width="16" height="10"><use href="#drive"/></svg><div class="t s" style="left:1181px;top:570px">Disk 1</div><div class="t" style="left:1163px;top:586px">Basic</div><div class="t" style="left:1163px;top:601px">10,00 GB</div><div class="t" style="left:1163px;top:616px">Online</div>
  <svg class="i" style="left:1164px;top:667px" width="16" height="17"><use href="#cd"/></svg><div class="t s" style="left:1181px;top:669px">CD-ROM 0</div><div class="t" style="left:1163px;top:685px">DVD (D:)</div><div class="t" style="left:1163px;top:715px">No Media</div>
  <div class="b" style="left:1154px;top:743px;width:618px;height:1px;background:#eaeaec"></div>
  <div class="b" style="left:1160px;top:748px;width:10px;height:12px;background:#000"></div><div class="t" style="left:1175px;top:746px">Unallocated</div>
  <div class="b" style="left:1244px;top:748px;width:10px;height:12px;background:#00007f"></div><div class="t" style="left:1259px;top:746px">Primary partition</div>
  <!-- v scroll -->
  <div class="b" style="left:1772px;top:464px;width:16px;height:280px;background:#fff;border-left:1px solid #bbb;box-sizing:border-box"></div>
  <div class="b" style="left:1772px;top:476px;width:16px;height:187px;background:#dcdcdc;border:1px solid #aaa;border-width:1px 0;box-sizing:border-box"></div>
  <div class="b" style="left:1772px;top:727px;width:16px;height:1px;background:#bbb"></div>
  <svg class="i" style="left:1775px;top:467px" width="10" height="8"><path d="M1 6l4-4 4 4" fill="none" stroke="#555" stroke-width="1.200"/></svg>
  <svg class="i" style="left:1775px;top:731px" width="10" height="8"><path d="M1 2l4 4 4-4" fill="none" stroke="#555" stroke-width="1.200"/></svg>
  <div class="b" style="left:1776px;top:566px;width:7px;height:8px;background:repeating-linear-gradient(#666 0 2px,transparent 2px 3px)"></div>
  <div class="b" style="left:1153px;top:763px;width:635px;height:1px;background:#b4b4b7"></div>
  <div class="b" style="left:1153px;top:765px;width:635px;height:2px;background:#b4b4b7"></div>
  <div class="b" style="left:1788px;top:136px;width:1px;height:631px;background:#c9c9cc"></div>
  <!-- Actions -->
  <div class="b" style="left:1794px;top:136px;width:2px;height:631px;background:#7a7a7c"></div>
  <div class="b" style="left:1794px;top:136px;width:74px;height:2px;background:#808083"></div>
  <div class="b" style="left:1796px;top:138px;width:72px;height:19px;background:#f4f2f5;border-bottom:2px solid #b0b0b3;box-sizing:border-box"></div>
  <div class="b" style="left:1796px;top:157px;width:72px;height:610px;background:#fff"></div>
  <div class="b" style="left:1796px;top:160px;width:72px;height:25px;background:linear-gradient(#b3d4ec,#a2c7e3)"></div>
  <div class="t s" style="left:1800px;top:141px">Actions</div>
  <div class="t" style="left:1802px;top:166px;font-size:14.3px;letter-spacing:0;color:#16283a">Disk Management</div>
  <div class="t" style="left:1826px;top:189px">More Actions</div>
  <svg class="i" style="left:1848px;top:346px" width="13" height="19"><path d="M.5.500V16l4-3.500 3 6 2.500-1.200-3-5.800H12z" fill="#fff" stroke="#111"/></svg>
  <!-- status -->
  <div class="b" style="left:959px;top:767px;width:909px;height:22px;background:#fff"></div>
  <div class="b" style="left:1762px;top:767px;width:1px;height:22px;background:#d3d3d6"></div>
  <div class="b" style="left:959px;top:789px;width:909px;height:1px;background:#727272"></div>
  <div class="b" style="left:959px;top:790px;width:909px;height:38px;background:#62c9ef"></div>
  <div class="b" style="left:959px;top:828px;width:909px;height:1px;background:#142430"></div>
  <svg class="i" style="left:970px;top:795px" width="27" height="26"><use href="#win"/></svg>
  <div class="b" style="left:1010px;top:790px;width:1px;height:38px;background:#2d7ea6"></div><div class="b" style="left:1069px;top:790px;width:1px;height:38px;background:#2d7ea6"></div>
  <svg class="i" style="left:1024px;top:793px" width="32" height="33"><use href="#srv"/></svg>
  <svg class="i" style="left:1088px;top:798px" width="28" height="22"><use href="#ps"/></svg>
  <svg class="i" style="left:1147px;top:795px" width="32" height="31"><use href="#exp"/></svg>
  <div class="b" style="left:1197px;top:790px;width:58px;height:38px;background:#a4ddf4;border-left:1px solid #2d7ea6;border-right:1px solid #2d7ea6"></div>
  <svg class="i" style="left:1209px;top:793px" width="32" height="32"><use href="#mgmt"/></svg>
  <svg class="i" style="left:1791px;top:806px" width="9" height="6"><path d="M0 6l4.500-5L9 6z" fill="#0c1a25"/></svg>
  <svg class="i" style="left:1812px;top:801px" width="16" height="17"><use href="#net"/></svg>
  <svg class="i" style="left:1836px;top:802px" width="16" height="16"><use href="#snd"/></svg>
  <div class="t" style="left:1457px;top:770px;height:60px;line-height:60px;font-size:45px;font-weight:bold;letter-spacing:2.2px;color:#3fa9dc;opacity:.3">http://wojcieh.net</div>
 </div>
</div>
</div></body></html>
